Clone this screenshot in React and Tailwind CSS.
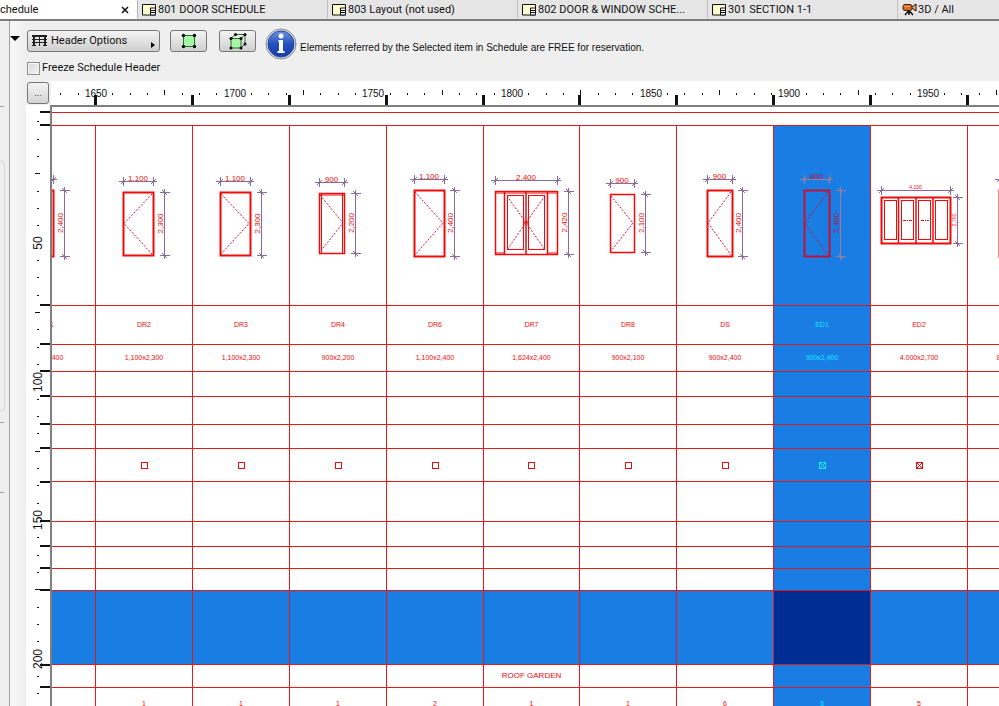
import React from "react";

const COL = 97;

const tabs = [
  { name: "801 DOOR SCHEDULE", icon: "layout" },
  { name: "803 Layout (not used)", icon: "layout" },
  { name: "802 DOOR & WINDOW SCHE...", icon: "layout" },
  { name: "301 SECTION 1-1", icon: "layout" },
  { name: "3D / All", icon: "camera" },
];

// door geometry is measured from the grid lines left of and above its cell
const items = [
  { code: "DR1", size: "900x2,400", count: "", h: "2,400", box: [30, 65, 55, 131], dimY: 54, dimX: 66, hinge: "left" },
  { code: "DR2", size: "1,100x2,300", count: "1", w: "1.100", h: "2,300", box: [28, 67, 58, 130], dimY: 56, dimX: 69, hinge: "left" },
  { code: "DR3", size: "1,100x2,300", count: "1", w: "1.100", h: "2,300", box: [28, 67, 58, 130], dimY: 56, dimX: 69, hinge: "right" },
  { code: "DR4", size: "900x2,200", count: "1", w: "900", h: "2,200", box: [30, 68, 55, 128], dimY: 57, dimX: 66, hinge: "right", jambs: true },
  { code: "DR6", size: "1,100x2,400", count: "2", w: "1,100", h: "2,400", box: [28, 65, 58, 131], dimY: 54, dimX: 68, hinge: "right" },
  { code: "DR7", size: "1,624x2,400", count: "1", w: "2,400", h: "2,420", box: [12, 66, 74, 129], dimY: 55, dimX: 85, kind: "double", level: "ROOF GARDEN" },
  { code: "DR8", size: "900x2,100", count: "1", w: "900", h: "2,100", box: [31, 69, 55, 127], dimY: 58, dimX: 66, hinge: "right", thin: true },
  { code: "DS", size: "900x2,400", count: "6", w: "900", h: "2,400", box: [31, 65, 56, 131], dimY: 54, dimX: 66, hinge: "left" },
  { code: "ED1", size: "900x2,400", count: "5", w: "900", h: "2,400", box: [31, 65, 56, 131], dimY: 54, dimX: 67, hinge: "left", selected: true, checked: true },
  { code: "ED2", size: "4.000x2,700", count: "5", w: "4,100", h: "2,700", box: [11, 72, 80, 118], dimY: 65, dimX: 87, kind: "sliding", checked: true },
  { code: "ED3", size: "8,000x2,700", count: "", box: [32, 65, 57, 131], dimY: 54, dimX: 67, hinge: "left" },
];

const rowTicks = [112, 125, 305, 344, 371, 396, 424, 448, 482, 521, 546, 568, 590, 665, 687];

function LayoutIcon() {
  return (
    <svg className="shrink-0" width="15" height="12" viewBox="0 0 15 12">
      <path d="M.5 .5h13v10.500h-13z" fill="#ffffd0" stroke="#111" />
      <path d="M8.500 4h5v7h-5z" fill="#fff" stroke="#111" />
      <path d="M9 6.500h5M9 8.500h5" stroke="#111" />
    </svg>
  );
}

function CameraIcon() {
  return (
    <svg className="shrink-0" width="15" height="13" viewBox="0 0 15 13">
      <path d="M7 7.500L3 12M7 7.500L11 12M7 7v5" stroke="#111" strokeWidth="1.500" />
      <path d="M9 4.500L14 1v7z" fill="#e8b080" stroke="#111" />
      <rect x="1" y="1.500" width="9" height="6" rx="2" fill="#d96a1e" stroke="#4a1d05" />
      <path d="M2.500 3.500h5" stroke="#f7b27a" />
    </svg>
  );
}

function InfoIcon() {
  return (
    <svg className="shrink-0" width="32" height="32" viewBox="0 0 32 32">
      <defs>
        <linearGradient id="info" x1="0" y1="0" x2="0" y2="1">
          <stop offset="0" stopColor="#6f97e0" />
          <stop offset="0.5" stopColor="#2450bd" />
          <stop offset="1" stopColor="#1a3cab" />
        </linearGradient>
      </defs>
      <circle cx="16" cy="16" r="15" fill="#d5d9e2" stroke="#858a96" />
      <circle cx="16" cy="16" r="13" fill="url(#info)" stroke="#26469c" />
      <circle cx="16" cy="8" r="2.500" fill="#fff" />
      <path d="M13.500 12H18v11h1.500v2h-7v-2H14v-9h-.5z" fill="#fff" />
    </svg>
  );
}

function SquareNodesIcon() {
  return (
    <svg width="16" height="16" viewBox="0 0 16 16">
      <rect x="2.500" y="2.500" width="11" height="11" fill="#a4f7a4" stroke="#2b6b2b" />
      {[2.5, 13.5].map((x) => [2.5, 13.5].map((y) => <circle key={x + "-" + y} cx={x} cy={y} r="1.700" fill="#000" />))}
    </svg>
  );
}

function CubeNodesIcon() {
  const nodes = [[2, 6.5], [12, 6.5], [2, 16], [12, 16], [6.5, 2.5], [16, 2.5], [16, 12]];
  return (
    <svg width="18" height="18" viewBox="0 0 18 18">
      <path d="M2 6.500h10V16H2z" fill="#a4f7a4" />
      <path d="M2 6.500L6.500 2.500H16V12l-4 4H2zM2 6.500h10V16M12 6.500l4-4" fill="none" stroke="#2b6b2b" />
      {nodes.map(([x, y]) => <circle key={x + "-" + y} cx={x} cy={y} r="1.500" fill="#000" />)}
    </svg>
  );
}

function HeaderIcon() {
  return (
    <svg className="shrink-0" width="15" height="12" viewBox="0 0 15 12">
      <path d="M0 0h15v2H0zM0 4h15v1H0zM0 7h15v1H0zM1 0h2v11H1zM7 0h1v11H7zM12 0h2v11h-2zM0 10h4v1H0zM11 10h4v1h-4z" fill="#222" />
    </svg>
  );
}

function DimensionH({ x1, x2, y, label, color, text, small }) {
  return (
    <g>
      <path d={`M${x1 - 4} ${y + 0.5}H${x2 + 4}`} stroke={color} />
      {[x1, x2].map((x) => (
        <path key={x} d={`M${x + 0.5} ${y - 4}v9M${x - 2} ${y + 3}l5 -5`} stroke={color} />
      ))}
      {label && <text x={(x1 + x2) / 2} y={small ? y - 1 : y} textAnchor="middle" fill={text} fontSize={small ? 5 : 8}>{label}</text>}
    </g>
  );
}

function DimensionV({ x, y1, y2, label, color, text, small }) {
  const mid = (y1 + y2) / 2;
  const tx = x - 1;
  return (
    <g>
      <path d={`M${x + 0.5} ${y1 - 3}V${y2 + 4}`} stroke={color} />
      {[y1, y2].map((y) => (
        <path key={y} d={`M${x - 4} ${y + 0.5}h10M${x - 2} ${y - 2}l5 5`} stroke={color} />
      ))}
      {label && <text x={tx} y={mid} textAnchor="middle" transform={`rotate(-90 ${tx} ${mid})`} fill={text} fontSize={small ? 5 : 8}>{label}</text>}
    </g>
  );
}

function Door({ item }) {
  const [x1, y1, x2, y2] = item.box;
  const mid = (y1 + y2) / 2;
  const red = item.selected ? "#c21336" : "#f00a0a";
  const dim = item.selected ? "#9a7f9c" : "#8a6a96";
  const text = item.selected ? "#b8123c" : "#f00a0a";
  const small = item.kind === "sliding";
  const near = item.hinge === "left" ? x2 - 1 : x1 + 1;
  const far = item.hinge === "left" ? x1 + 1 : x2 - 1;

  return (
    <svg className="block font-['Liberation_Sans',sans-serif]" width={COL} height="179" viewBox={`1 1 ${COL} 179`}>
      <DimensionH x1={x1} x2={x2} y={item.dimY} label={item.w} color={dim} text={text} small={small} />
      <DimensionV x={item.dimX} y1={y1} y2={y2} label={item.h} color={dim} text={text} small={small} />

      {!item.kind && (
        <g fill="none" stroke={red}>
          <rect x={x1 + 0.5} y={y1 + 0.5} width={x2 - x1} height={y2 - y1} strokeWidth={item.jambs || item.thin ? 1.5 : 2} />
          {item.jambs && <path d={`M${x1 + 2.5} ${y1}V${y2}M${x2 - 1.5} ${y1}V${y2}M${x1} ${y1 + 2}H${x2}`} />}
          <path d={`M${near} ${y1 + 2}L${far} ${mid}L${near} ${y2 - 1}`} stroke={item.selected ? red : "#d01040"} strokeDasharray="2 1.500" />
        </g>
      )}

      {item.kind === "double" && (
        <g fill="none" stroke={red}>
          <rect x={x1 + 0.5} y={y1 + 0.5} width={x2 - x1} height={y2 - y1} strokeWidth="1.500" />
          <path d={`M${x1} ${y2 - 1}h9M${x2 - 9} ${y2 - 1}h9M${x1} ${y1 + 2}H${x2}`} />
          <path d={`M${x1 + 9.5} ${y1}V${y2}M${x2 - 9.5} ${y1}V${y2}M${x1 + 31} ${y1}V${y2}`} strokeWidth="1.500" />
          <rect x={x1 + 12.5} y={y1 + 4.5} width="16" height="54" />
          <rect x={x1 + 33.5} y={y1 + 4.5} width="16" height="54" />
          <path d={`M${x1 + 12} ${y1 + 5}L${x1 + 31} ${mid}L${x1 + 12} ${y2 - 4}M${x2 - 12} ${y1 + 5}L${x1 + 31} ${mid}L${x2 - 12} ${y2 - 4}`} stroke="#d01040" strokeDasharray="2 1.500" />
          <circle cx={x1 + 31} cy={mid} r="1.500" />
        </g>
      )}

      {item.kind === "sliding" && (
        <g fill="none" stroke={red}>
          <rect x={x1 + 0.5} y={y1 + 0.5} width={x2 - x1} height={y2 - y1} strokeWidth="2" />
          {[3, 20, 37, 54].map((dx) => (
            <rect key={dx} x={x1 + dx + 0.5} y={y1 + 3.5} width="12" height="39" />
          ))}
          <path d={`M${x1 + 17.5} ${y1}V${y2}M${x1 + 35} ${y1}V${y2}M${x1 + 52} ${y1}V${y2}`} strokeWidth="1.500" />
          <path d={`M${x1 + 22} ${mid + 0.5}h9M${x1 + 40} ${mid + 0.5}h8`} strokeDasharray="3 1 1 1" />
        </g>
      )}
    </svg>
  );
}

function CheckCell({ item }) {
  return (
    <label className={`relative mx-auto flex size-[7px] ${item.selected ? "text-[#19e6ff]" : "text-[#e60f0f]"}`}>
      <input
        type="checkbox"
        aria-label={item.code}
        defaultChecked={item.checked}
        className="peer size-full appearance-none border border-current"
      />
      <svg className="pointer-events-none absolute inset-0 hidden peer-checked:block" width="7" height="7" viewBox="0 0 7 7">
        <path d="M1 1l5 5M6 1l-5 5" stroke="currentColor" />
      </svg>
    </label>
  );
}

const rows = [
  { height: "h-[180px]", render: (item) => <Door item={item} /> },
  { height: "h-[39px] pb-0.5", render: (item) => item.code },
  { height: "h-[27px] pb-0.5", render: (item) => item.size },
  { height: "h-[25px]" },
  { height: "h-[28px]" },
  { height: "h-[24px]" },
  { height: "h-[33px]", render: (item) => <CheckCell item={item} /> },
  { height: "h-[40px]" },
  { height: "h-[25px]" },
  { height: "h-[22px]" },
  { height: "h-[22px]" },
  { height: "h-[74px]", selected: true },
  { height: "h-[23px]", render: (item) => item.level && <span className="text-[8px]">{item.level}</span> },
  { height: "h-[32px]", render: (item) => item.count },
];

function cellColor(row, item) {
  if (row.selected && item.selected) return "bg-[#002d94]";
  if (row.selected || item.selected) return "bg-[#1a7de4]";
  return "bg-white";
}

function ScheduleTable() {
  return (
    <table className="-ml-[53px] w-[1066px] table-fixed border-separate border-spacing-0 text-center font-['Liberation_Sans',sans-serif] text-[7px] leading-none">
      <colgroup>
        {items.map((item) => <col key={item.code} className={item.kind === "double" ? "w-[96px]" : "w-[97px]"} />)}
      </colgroup>
      <thead>
        <tr><th colSpan={items.length} className="h-[6px] border-b border-[#e31a1a] p-0" /></tr>
        <tr><th colSpan={items.length} className="h-[13px] border-b border-[#e31a1a] p-0" /></tr>
      </thead>
      <tbody>
        {rows.map((row, i) => (
          <tr key={i}>
            {items.map((item) => (
              <td
                key={item.code}
                className={`p-0 ${row.height} ${cellColor(row, item)} ${item.selected ? "text-[#19e6ff]" : "text-[#f00a0a]"} overflow-hidden whitespace-nowrap border-r border-b border-[#e31a1a] align-middle`}
              >
                {row.render && row.render(item)}
              </td>
            ))}
          </tr>
        ))}
      </tbody>
    </table>
  );
}

// 50 units take 139 pixels, with a mark on each eighth of that
function HorizontalRuler() {
  const marks = [];
  for (let i = -3; i < 60; i++) {
    if (i % 8 !== 0) marks.push(i);
  }
  return (
    <svg className="block h-[24px] min-w-0 flex-1 bg-white font-['Liberation_Sans',sans-serif]" fontSize="10">
      {marks.map((i) => {
        const x = Math.round(44 + i * 17.33);
        return i % 4 === 0
          ? <rect key={i} x={x} y="9" width="1" height="5" fill="#111" />
          : <rect key={i} x={x} y="12" width="1" height="2" fill="#111" />;
      })}
      {[1650, 1700, 1750, 1800, 1850, 1900, 1950].map((n, i) => (
        <text key={n} x={45 + Math.round(i * 138.67)} y="16" textAnchor="middle" fill="#111">{n}</text>
      ))}
      {items.map((item, i) => <rect key={item.code} x={43 + i * COL - (i > 4 ? 1 : 0)} y="14" width="3" height="10" fill="#111" />)}
    </svg>
  );
}

function VerticalRuler() {
  const marks = [];
  for (let i = 1; i < 36; i++) {
    if (i % 8 !== 0) marks.push(i);
  }
  return (
    <svg className="block w-[24px] shrink-0 bg-white font-['Liberation_Sans',sans-serif]" height="600" fontSize="12">
      {marks.map((i) => {
        const y = Math.round(i * 17.33 - 1);
        return i % 4 === 0
          ? <rect key={i} x="9" y={y} width="5" height="1" fill="#111" />
          : <rect key={i} x="11" y={y} width="2" height="1" fill="#111" />;
      })}
      {rowTicks.map((y) => <rect key={y} x="14" y={y - 106} width="10" height="2" fill="#111" />)}
      {[50, 100, 150, 200].map((n, i) => {
        const y = 138 + Math.round(i * 138.67);
        return <text key={n} x="16" y={y} textAnchor="middle" transform={`rotate(-90 16 ${y})`} fill="#111">{n}</text>;
      })}
    </svg>
  );
}

function TabBar() {
  return (
    <nav className="flex h-[21px] shrink-0 border-b-2 border-[#7d7d7d] bg-[#e6e6e6] text-[11px] leading-[18px]">
      <div className="flex w-[138px] shrink-0 justify-between border-r border-[#b5b5b5] bg-white pr-2">
        <button type="button">chedule</button>
        <button type="button" aria-label="Close tab" className="flex items-center">
          <svg width="8" height="8" viewBox="0 0 8 8"><path d="M1 1l6 6M7 1l-6 6" stroke="#111" strokeWidth="1.500" /></svg>
        </button>
      </div>
      {tabs.map((tab) => (
        <button
          key={tab.name}
          type="button"
          className="flex w-[190px] shrink-0 items-center gap-px overflow-hidden whitespace-nowrap border-r border-[#c2c2c2] pl-1"
        >
          {tab.icon === "camera" ? <CameraIcon /> : <LayoutIcon />}
          {tab.name}
        </button>
      ))}
    </nav>
  );
}

function Toolbar() {
  const button = "flex h-[22px] items-center rounded-[3px] border border-[#777] bg-linear-to-b from-[#f4f4f4] to-[#cfcfcf]";
  return (
    <div className="h-[60px] shrink-0 pt-[4px] pl-px">
      <div className="flex h-[32px] items-center">
        <button type="button" className={`${button} w-[133px] gap-1 pr-1 pl-1 text-[11px]`}>
          <HeaderIcon />
          <span>Header Options</span>
          <svg className="mt-2 ml-auto" width="4" height="6" viewBox="0 0 4 6"><path d="M0 0l4 3l-4 3z" fill="#000" /></svg>
        </button>
        <button type="button" aria-label="Select in plan" className={`${button} ml-[10px] w-[37px] justify-center`}><SquareNodesIcon /></button>
        <button type="button" aria-label="Select in 3D" className={`${button} ml-3 w-[37px] justify-center`}><CubeNodesIcon /></button>
        <div className="mt-[6px] ml-[9px] flex items-center gap-[3px]">
          <InfoIcon />
          <p className="mt-[6px] whitespace-nowrap font-['Liberation_Sans',sans-serif] text-[10px]">
            Elements referred by the Selected item in Schedule are FREE for reservation.
          </p>
        </div>
      </div>
      <label className="mt-[3px] flex h-[16px] w-fit items-center gap-[2px] text-[11px]">
        <input type="checkbox" className="size-[13px] appearance-none border border-[#8e8f8f] bg-linear-to-br from-[#d2d5d8] to-[#f6f6f6] shadow-[inset_0_0_0_1px_#f4f4f4]" />
        Freeze Schedule Header
      </label>
    </div>
  );
}

export default function App() {
  return (
    <div className="flex h-screen flex-col overflow-hidden bg-[#efefef] font-[Roboto,'Liberation_Sans',sans-serif] text-[#111]">
      <TabBar />
      <div className="flex min-h-0 flex-1">
        {/* Edge of the neighbouring palette */}
        <div className="flex w-[10px] shrink-0 flex-col border-r border-[#a0a0a0]">
          <div className="h-[86px] w-1 border-b border-[#a0a0a0]" />
          <div className="mt-[54px] h-[250px] w-[5px] rounded-r-sm border-y border-r border-[#d5d5d5]" />
          <div className="h-[12px] w-1 border-b border-[#a0a0a0]" />
          <div className="h-[70px] w-1 border-b border-[#a0a0a0]" />
        </div>
        <div className="flex w-[16px] shrink-0 items-start bg-linear-to-r from-[#f8f8f8] to-[#efefef] pt-[15px]">
          <button type="button" aria-label="Collapse header">
            <svg width="10" height="5" viewBox="0 0 10 5"><path d="M0 0h10l-5 5z" fill="#000" /></svg>
          </button>
        </div>

        <main className="flex min-w-0 flex-1 flex-col">
          <Toolbar />
          <div className="flex shrink-0">
            <div className="w-[25px] shrink-0 pt-px pl-px">
              <button type="button" className="block h-[22px] w-[22px] rounded-[3px] border border-[#777] bg-linear-to-b from-[#f4f4f4] to-[#d4d4d4] text-[9px] leading-none">...</button>
            </div>
            <HorizontalRuler />
          </div>
          <div className="flex min-h-0 flex-1 bg-white">
            <VerticalRuler />
            <div className="min-w-0 flex-1 overflow-hidden border-t-2 border-l-2 border-[#7f7f7f]">
              <ScheduleTable />
            </div>
          </div>
        </main>
      </div>
    </div>
  );
}
